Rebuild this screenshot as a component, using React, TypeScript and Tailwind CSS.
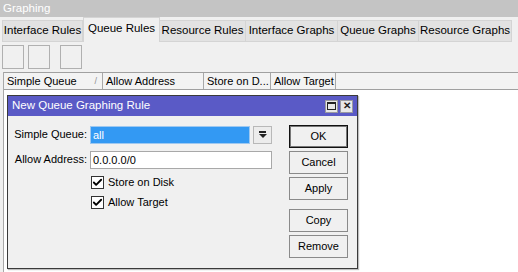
import { Check } from 'lucide-react';

const tabs = ['Interface Rules', 'Queue Rules', 'Resource Rules', 'Interface Graphs', 'Queue Graphs', 'Resource Graphs'];
const tabWidths = ['w-[81px]', 'w-[77px]', 'w-[86px]', 'w-[92px]', 'w-[81px]', 'w-[93px]'];

const columns = [
  { label: 'Simple Queue', w: 'w-[99px]', sort: true },
  { label: 'Allow Address', w: 'w-[101px]' },
  { label: 'Store on D...', w: 'w-[67px]' },
  { label: 'Allow Target', w: 'w-[65px]' },
];

function DialogButton({ label, primary }: { label: string; primary?: boolean }) {
  return (
    <div
      className={`h-[23px] w-[59px] flex items-center justify-center bg-[#f0f0f0] text-black ${
        primary ? 'border border-[#111] ring-1 ring-inset ring-[#777]' : 'border border-[#8a8a8a]'
      }`}
    >
      {label}
    </div>
  );
}

function CheckRow({ label }: { label: string }) {
  return (
    <div className="flex items-center gap-[4px] h-[20px]">
      <div className="w-[13px] h-[13px] border border-[#333] bg-white flex items-center justify-center">
        <Check size={11} strokeWidth={4} className="text-black" />
      </div>
      <span>{label}</span>
    </div>
  );
}

export default function App() {
  return (
    <div className="w-[518px] h-[272px] overflow-hidden bg-white text-[11px] text-black whitespace-nowrap font-['Liberation_Sans',Arial,sans-serif] flex flex-col">
      {/* window caption */}
      <div className="h-[17px] bg-[#c4c4c4] text-white text-[11.5px] pl-[3px] leading-[17px] shrink-0">Graphing</div>

      {/* tabs */}
      <div className="h-[25px] bg-[#f0f0f0] flex items-end pl-[2px] shrink-0">
        {tabs.map((t, i) => (
          <div
            key={t}
            className={`${tabWidths[i]} flex items-center justify-center border-[#d4d4d4] border-t border-r text-[11.5px] ${
              i === 1 ? 'h-[25px] bg-[#f0f0f0] border-l pb-[3px]' : 'h-[22px] bg-[#e2e2e2] border-b'
            } ${i === 0 ? 'border-l' : ''}`}
          >
            {t}
          </div>
        ))}
      </div>

      {/* toolbar */}
      <div className="h-[30px] bg-[#f0f0f0] flex items-center pl-[2px] gap-[4px] shrink-0">
        <div className="w-[22px] h-[24px] border border-[#b0b0b0] bg-[#f0f0f0]" />
        <div className="w-[22px] h-[24px] border border-[#b0b0b0] bg-[#f0f0f0]" />
        <div className="w-[22px] h-[24px] border border-[#b0b0b0] bg-[#f0f0f0] ml-[6px]" />
      </div>

      {/* list */}
      <div className="flex-1 flex bg-[#f0f0f0]">
        <div className="w-[3px] shrink-0" />
        <div className="flex-1 flex flex-col border-l border-[#a8a8a8] bg-white">
          <div className="h-[18px] flex border-t border-b border-[#a0a0a0] bg-[#f3f3f3] shrink-0">
            {columns.map((c) => (
              <div key={c.label} className={`${c.w} relative border-r border-[#a8a8a8] pl-[3px] leading-[16px] overflow-hidden`}>
                {c.label}
                {c.sort && <span className="absolute right-[5px] top-0 text-[9px] text-[#909090]">/</span>}
              </div>
            ))}
          </div>

          {/* dialog */}
          <div className="pl-[3px] pt-[5px]">
            <div className="w-[351px] h-[174px] border border-[#3a3a3a] bg-[#f0f0f0] flex flex-col shadow-[1px_1px_1px_rgba(0,0,0,0.25)]">
              <div className="h-[20px] bg-[#5a5ac6] text-white text-[11.5px] flex items-center pl-[4px] pr-[4px] shrink-0">
                <span className="flex-1">New Queue Graphing Rule</span>
                <div className="w-[13px] h-[13px] bg-[#e8e8e8] border border-[#9a9aa0] flex items-center justify-center mr-[2px]">
                  <div className="w-[9px] h-[8px] border border-[#222] border-t-2" />
                </div>
                <div className="w-[13px] h-[13px] bg-[#e8e8e8] border border-[#9a9aa0] flex items-center justify-center text-[10px] font-bold leading-none text-[#222]">
                  ✕
                </div>
              </div>

              <div className="flex-1 flex pt-[9px]">
                <div className="w-[276px] flex flex-col">
                  <div className="flex items-center h-[19px]">
                    <span className="w-[82px] text-right pr-[3px]">Simple Queue:</span>
                    <div className="w-[160px] h-[18px] bg-[#3399f3] border border-[#9ec8f0] text-white pl-[2px] leading-[16px]">all</div>
                    <div className="w-[19px] h-[18px] ml-[3px] bg-[#ececec] border border-[#b8b8b8] flex flex-col items-center justify-center">
                      <div className="w-[7px] h-[2px] bg-[#222] mb-[1px]" />
                      <div className="w-0 h-0 border-l-[4px] border-r-[4px] border-t-[4px] border-l-transparent border-r-transparent border-t-[#222]" />
                    </div>
                  </div>
                  <div className="flex items-center h-[19px] mt-[6px]">
                    <span className="w-[82px] text-right pr-[3px]">Allow Address:</span>
                    <div className="w-[182px] h-[18px] bg-white border border-[#a8a8a8] pl-[2px] leading-[16px]">0.0.0.0/0</div>
                  </div>
                  <div className="pl-[83px] mt-[3px] flex flex-col">
                    <CheckRow label="Store on Disk" />
                    <CheckRow label="Allow Target" />
                  </div>
                </div>
                <div className="flex flex-col gap-[3px] ml-[5px]">
                  <DialogButton label="OK" primary />
                  <DialogButton label="Cancel" />
                  <DialogButton label="Apply" />
                  <div className="h-[3px]" />
                  <DialogButton label="Copy" />
                  <DialogButton label="Remove" />
                </div>
              </div>
            </div>
          </div>
        </div>
      </div>
    </div>
  );
}
